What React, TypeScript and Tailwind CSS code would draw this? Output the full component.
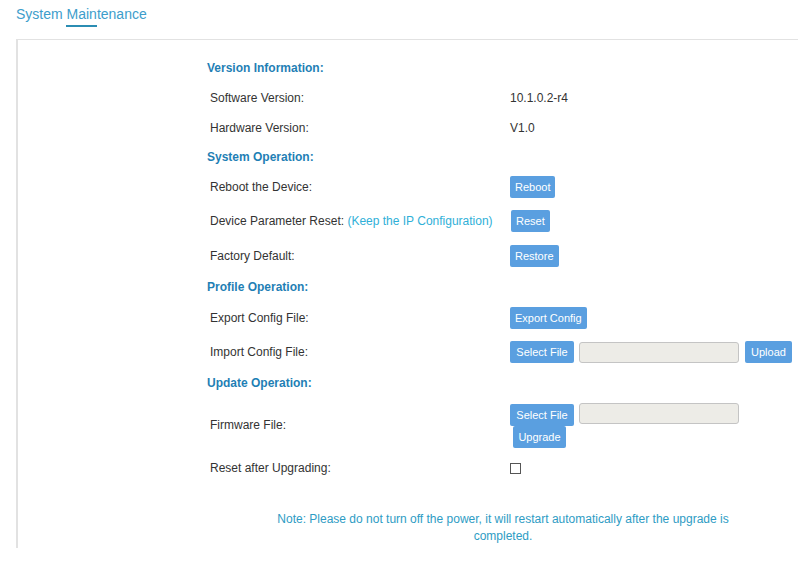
import { ReactNode } from "react";

const Btn = ({ children, className = "" }: { children: ReactNode; className?: string }) => (
  <button className={`h-[22px] px-[5px] rounded-[2px] bg-[#5a9fe0] text-white text-[11px] leading-[22px] whitespace-nowrap ${className}`}>
    {children}
  </button>
);

const FileBox = () => <div className="w-[160px] h-[21px] rounded-[3px] border border-[#c4c4c4] bg-[#edece7]" />;

const Header = ({ children, h = "h-[28px]" }: { children: ReactNode; h?: string }) => (
  <div className={`${h} flex items-center text-[12px] font-bold text-[#1f7fb5]`}>{children}</div>
);

const Row = ({ label, h, children }: { label: ReactNode; h: string; children?: ReactNode }) => (
  <div className={`${h} flex items-center pl-[3px] text-[12px] text-[#333]`}>
    <div className="w-[300px] shrink-0">{label}</div>
    <div className="flex items-center">{children}</div>
  </div>
);

export default function App() {
  return (
    <div className="w-[804px] h-[562px] bg-white overflow-hidden font-['Liberation_Sans',Arial,sans-serif]">
      <div className="pl-4 pt-[6px]">
        <div className="text-[14px] leading-[16px] text-[#3d9dcb]">System Maintenance</div>
        <div className="ml-[50px] mt-[3px] w-[31px] h-[2px] bg-[#2b8db3]" />
      </div>

      <div className="ml-4 mt-3 w-[782px] h-[509px] border-t border-l-2 border-[#e2e2e2] pl-[189px] pt-[13px]">
        <Header h="h-[30px]">Version Information:</Header>
        <Row label="Software Version:" h="h-[30px]">10.1.0.2-r4</Row>
        <Row label="Hardware Version:" h="h-[30px]">V1.0</Row>

        <Header>System Operation:</Header>
        <Row label="Reboot the Device:" h="h-[32px]">
          <Btn>Reboot</Btn>
        </Row>
        <Row
          h="h-[36px]"
          label={
            <span>
              Device Parameter Reset: <span className="text-[#2fb0d8]">(Keep the IP Configuration)</span>
            </span>
          }
        >
          <Btn className="ml-px">Reset</Btn>
        </Row>
        <Row label="Factory Default:" h="h-[34px]">
          <Btn>Restore</Btn>
        </Row>

        <Header>Profile Operation:</Header>
        <Row label="Export Config File:" h="h-[34px]">
          <Btn>Export Config</Btn>
        </Row>
        <Row label="Import Config File:" h="h-[34px]">
          <Btn className="w-[64px]">Select File</Btn>
          <div className="ml-[5px]">
            <FileBox />
          </div>
          <Btn className="ml-[6px] w-[47px]">Upload</Btn>
        </Row>

        <Header>Update Operation:</Header>
        <Row label="Firmware File:" h="h-[56px]">
          <div className="flex flex-col">
            <div className="flex items-start">
              <Btn className="w-[64px] mt-px">Select File</Btn>
              <div className="ml-[5px]">
                <FileBox />
              </div>
            </div>
            <Btn className="ml-[3px] w-[53px] self-start">Upgrade</Btn>
          </div>
        </Row>
        <Row label="Reset after Upgrading:" h="h-[30px]">
          <div className="w-[11px] h-[11px] border border-[#555] bg-white" />
        </Row>

        <div className="ml-[46px] mt-[28px] w-[500px] text-center text-[12px] leading-[17px] text-[#2e9cc4]">
          Note: Please do not turn off the power, it will restart automatically after the upgrade is completed.
        </div>
      </div>
    </div>
  );
}
